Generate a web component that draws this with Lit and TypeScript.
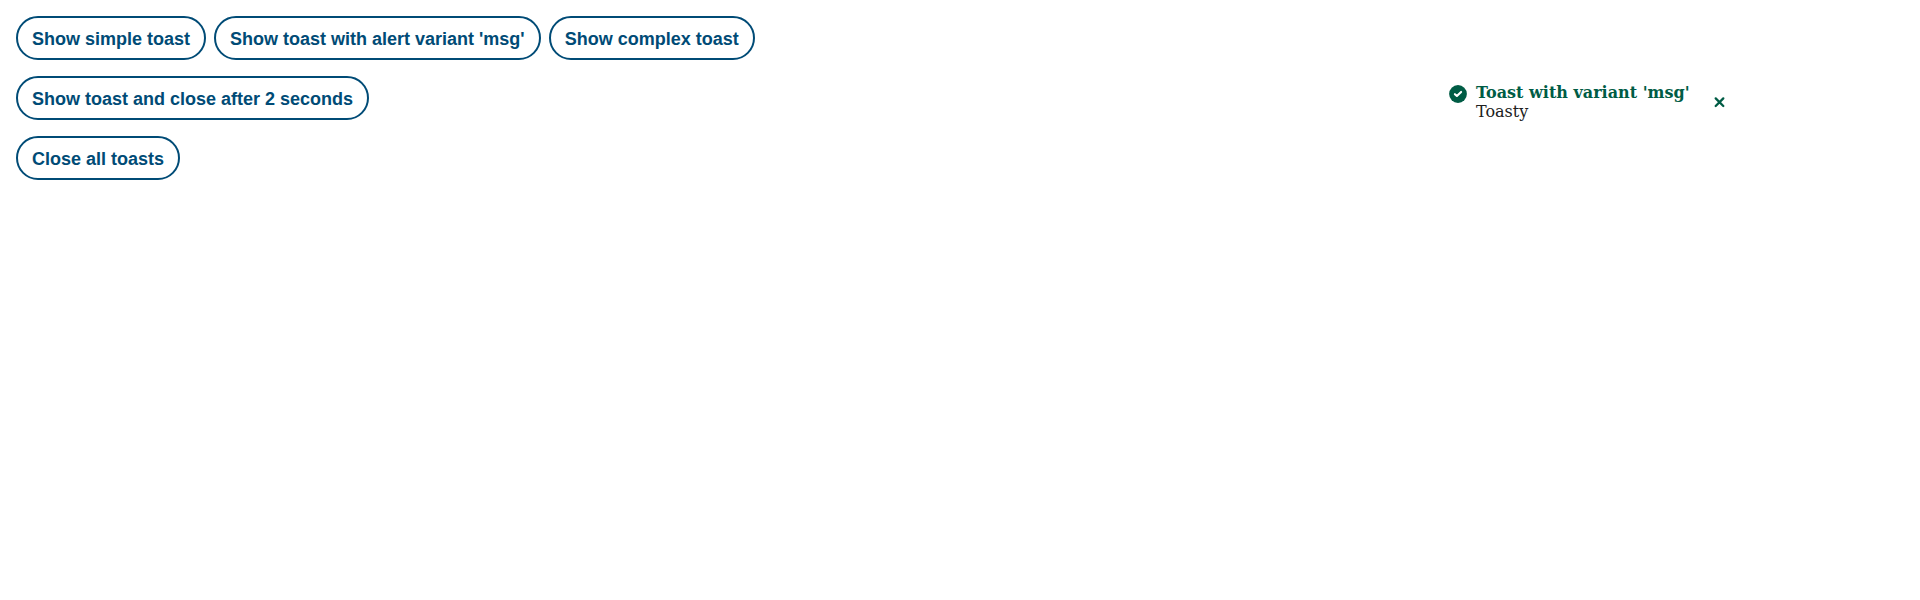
import { LitElement, html, css } from "lit";
import { customElement, property } from "lit/decorators.js";

@customElement("outline-button")
class OutlineButton extends LitElement {
  static styles = css`
    :host { display: block; }
    .button {
      display: block;
      box-sizing: border-box;
      height: 44px;
      margin: 0;
      padding: 2px 14px 0;
      border: 2px solid #004b76;
      border-radius: 22px;
      background: #fff;
      color: #004b76;
      font: 700 18px/20px "Liberation Sans", Arial, sans-serif;
      white-space: nowrap;
      cursor: pointer;
    }
  `;

  render() {
    return html`<button class="button" type="button"><slot></slot></button>`;
  }
}

@customElement("toast-message")
class ToastMessage extends LitElement {
  @property() heading = "";

  static styles = css`
    :host { display: block; }
    .toast {
      display: flex;
      align-items: flex-start;
      font: 400 16px/19px "DejaVu Serif", serif;
      color: #202020;
    }
    .icon { display: block; flex: none; width: 18px; height: 18px; margin: 2px 9px 0 0; }
    .content { width: 213px; white-space: nowrap; }
    .heading { font-weight: 700; color: #005c45; }
    .close {
      display: flex;
      align-items: center;
      justify-content: center;
      width: 44px;
      height: 38px;
      margin: 0 0 0 8px;
      padding: 0;
      border: 0;
      background: none;
      cursor: pointer;
    }
    .cross { display: block; width: 12px; height: 12px; }
  `;

  render() {
    return html`
      <div class="toast" role="alert">
        <svg class="icon" viewBox="0 0 18 18" aria-hidden="true">
          <circle cx="9" cy="9" r="8.9" fill="#005c45" />
          <path d="M5.9 9.2 7.9 11 12.1 6.9" fill="none" stroke="#fff" stroke-width="2.1" stroke-linecap="round" stroke-linejoin="round" />
        </svg>
        <div class="content">
          <div class="heading">${this.heading}</div>
          <div><slot></slot></div>
        </div>
        <button class="close" type="button" aria-label="Close">
          <svg class="cross" viewBox="0 0 12 12" aria-hidden="true">
            <path d="M2.7 2.4 10.3 10M10.3 2.4 2.7 10" fill="none" stroke="#005c45" stroke-width="2.3" stroke-linecap="round" />
          </svg>
        </button>
      </div>
    `;
  }
}

@customElement("app-root")
class AppRoot extends LitElement {
  static styles = css`
    :host { display: block; background: #fff; }
    .page {
      display: flex;
      justify-content: space-between;
      box-sizing: border-box;
      min-height: 600px;
      padding: 16px;
    }
    .actions { display: flex; flex-direction: column; gap: 16px; }
    .row { display: flex; gap: 8px; }
    .toasts { padding: 67px 163px 0 0; }
  `;

  render() {
    return html`
      <div class="page">
        <div class="actions">
          <div class="row">
            <outline-button>Show simple toast</outline-button>
            <outline-button>Show toast with alert variant 'msg'</outline-button>
            <outline-button>Show complex toast</outline-button>
          </div>
          <div class="row"><outline-button>Show toast and close after 2 seconds</outline-button></div>
          <div class="row"><outline-button>Close all toasts</outline-button></div>
        </div>
        <div class="toasts">
          <toast-message heading="Toast with variant 'msg'">Toasty</toast-message>
        </div>
      </div>
    `;
  }
}
